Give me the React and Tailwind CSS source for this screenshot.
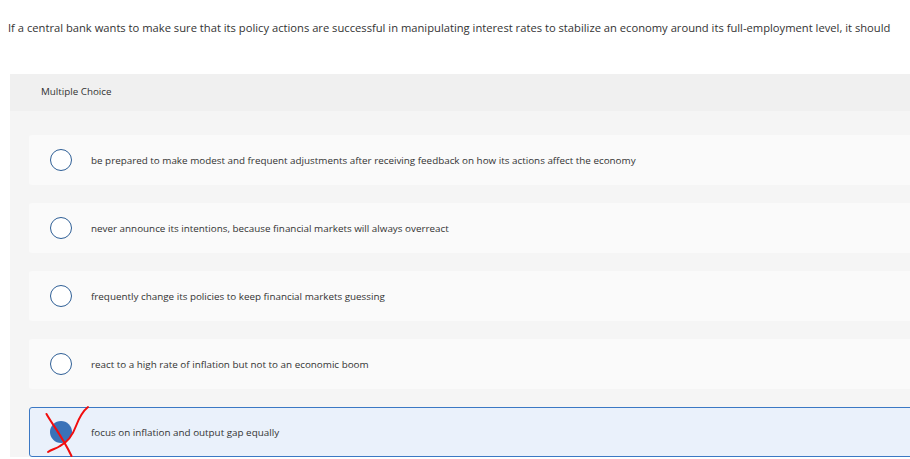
const options = [
  'be prepared to make modest and frequent adjustments after receiving feedback on how its actions affect the economy',
  'never announce its intentions, because financial markets will always overreact',
  'frequently change its policies to keep financial markets guessing',
  'react to a high rate of inflation but not to an economic boom',
];

function Radio({ checked }) {
  if (checked) {
    return <span className="block w-[22px] h-[22px] rounded-full bg-[#3a72b8]" />;
  }
  return <span className="block w-[22px] h-[22px] rounded-full border-[1.5px] border-[#2f5f96] bg-white" />;
}

function Option({ text, selected }) {
  return (
    <div
      className={`relative flex items-center h-[50px] rounded-[3px] ${
        selected ? 'bg-[#eaf1fb] border border-[#3b78c4]' : 'bg-[#fafafa] border border-transparent'
      }`}
    >
      <div className="w-[61px] flex justify-center pl-[1px]">
        <Radio checked={selected} />
      </div>
      <span className="text-[9.85px] text-[#333]">{text}</span>
      {selected && (
        // red marking drawn over the answer
        <svg
          className="absolute left-[-1px] top-[-8px] pointer-events-none"
          width="70"
          height="60"
          viewBox="29 400 70 60"
          fill="none"
          stroke="#f20d0d"
          strokeWidth="2"
          strokeLinecap="round"
        >
          <path d="M46.5 414 C 52 424, 62 436, 71.5 456" />
          <path d="M48 452 C 52 449, 56 449, 60 446 C 66 443, 72 437, 76 426 C 79 418, 83 411, 88 407" />
        </svg>
      )}
    </div>
  );
}

export default function App() {
  return (
    <div className="w-[910px] h-[459px] overflow-hidden bg-white font-['Open_Sans',sans-serif]">
      <p className="pl-2 pt-[20px] h-[74px] text-[11.2px] text-[#333] whitespace-nowrap">
        If a central bank wants to make sure that its policy actions are successful in manipulating interest rates to
        stabilize an economy around its full-employment level, it should
      </p>
      <div className="ml-[10px] w-[1000px]">
        <div className="h-[37px] bg-[#f0f0f0] flex items-center pl-[31px] text-[9.8px] text-[#333]">
          Multiple Choice
        </div>
        <div className="bg-[#f5f5f5] pt-[24px] pl-[19px] flex flex-col gap-[18px]">
          {options.map((t) => (
            <Option key={t} text={t} />
          ))}
          <Option text="focus on inflation and output gap equally" selected />
        </div>
      </div>
    </div>
  );
}
